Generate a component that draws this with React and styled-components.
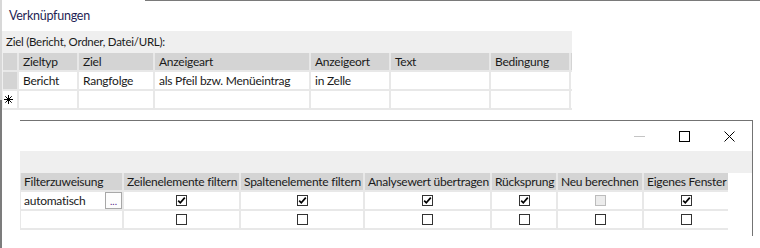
import styled, { createGlobalStyle } from 'styled-components'

const GlobalStyle = createGlobalStyle`
  html, body {
    margin: 0;
    padding: 0;
    background: #ffffff;
  }
  body {
    font-family: Lato, 'Noto Sans', Arial, sans-serif;
    font-size: 12px;
    letter-spacing: -0.25px;
    color: #1a1a1a;
  }
`

const Desktop = styled.div`
  position: relative;
  width: 760px;
  height: 248px;
  overflow: hidden;
  background: #ffffff;
`

const TopEdge = styled.div`
  position: absolute;
  top: 0;
  left: 145px;
  right: 0;
  height: 1px;
  background: #7a7a7a;
`

const BackWindow = styled.div`
  height: 248px;
  box-sizing: border-box;
  border-left: 2px solid;
  border-image: linear-gradient(to bottom, #d8d8d8 0 100px, #7c7c7c 100px) 1;
`

const Title = styled.div`
  height: 31px;
  padding-left: 7px;
  line-height: 32px;
  color: #1f1f55;
  font-size: 12.5px;
`

const Band = styled.div`
  width: 570px;
  background: #efefef;
  overflow: hidden;
  padding-left: ${(p) => p.$inset || 0}px;
  box-sizing: border-box;
`

const BandLabel = styled.div`
  height: 22px;
  line-height: 21px;
  padding-left: 3px;
  font-size: 11.5px;
  color: #1a1a1a;
`

const Grid = styled.div`
  display: grid;
  grid-template-columns: ${(p) => p.$cols};
  grid-auto-rows: 17px;
  gap: 2px;
  padding-bottom: 2px;
  background: #e8e8e8;
  width: max-content;
`

const Cell = styled.div`
  background: ${(p) => (p.$head ? '#d4d4d4' : '#ffffff')};
  line-height: 17px;
  padding-left: ${(p) => (p.$pad === undefined ? 4 : p.$pad)}px;
  white-space: nowrap;
  overflow: hidden;
  color: #1a1a1a;
  display: flex;
  align-items: center;
  justify-content: ${(p) => (p.$center ? 'center' : 'flex-start')};
  gap: 4px;
`

const Star = styled.svg`
  width: 9px;
  height: 9px;
  display: block;
  margin-left: -3px;
`

const FrontWindow = styled.div`
  position: absolute;
  left: 20px;
  top: 120px;
  width: 733px;
  height: 116px;
  box-sizing: border-box;
  border-top: 1px solid #737373;
  border-right: 1px solid #737373;
  background: #ffffff;
  display: flex;
  flex-direction: column;
`

const TitleBar = styled.div`
  height: 30px;
  display: flex;
  justify-content: flex-end;
  align-items: center;
  padding-right: 17px;
  gap: 34px;
`

const Control = styled.svg`
  width: 11px;
  height: 11px;
  display: block;
`

const FrontBand = styled.div`
  height: 22px;
  background: #efefef;
`

const FrontGrid = styled(Grid)`
  padding-left: 1px;
`

const CellText = styled.span`
  flex: 1;
`

const DotsButton = styled.div`
  width: 15px;
  height: 15px;
  border: 1px solid #a8a8a8;
  background: #fdfdfd;
  color: #5a2a8a;
  font-size: 10px;
  line-height: 17px;
  text-align: center;
  letter-spacing: 0;
  overflow: hidden;
`

const Box = styled.div`
  width: 11px;
  height: 11px;
  box-sizing: border-box;
  border: 1px solid ${(p) => (p.$disabled ? '#bcbcbc' : '#333333')};
  background: ${(p) => (p.$disabled ? '#ececec' : '#ffffff')};
  display: flex;
  align-items: center;
  justify-content: center;
`

const Check = ({ checked, disabled }) => (
  <Box $disabled={disabled}>
    {checked && (
      <svg width="9" height="9" viewBox="0 0 9 9">
        <path d="M1.2 4.6 L3.3 6.8 L7.8 1.6" fill="none" stroke="#000" strokeWidth="1.7" />
      </svg>
    )}
  </Box>
)

const backCols = '14px 58px 74px 154px 78px 98px 78px 1px'
const backHead = ['', 'Zieltyp', 'Ziel', 'Anzeigeart', 'Anzeigeort', 'Text', 'Bedingung', '']
const backRow = ['Bericht', 'Rangfolge', 'als Pfeil bzw. Menüeintrag', 'in Zelle', '', '', '']

const frontCols = '101px 115px 122px 125px 64px 84px 84px'
const frontHead = [
  'Filterzuweisung',
  'Zeilenelemente filtern',
  'Spaltenelemente filtern',
  'Analysewert übertragen',
  'Rücksprung',
  'Neu berechnen',
  'Eigenes Fenster',
]
const firstChecks = [
  { checked: true },
  { checked: true },
  { checked: true },
  { checked: true },
  { disabled: true },
  { checked: true },
]

const App = () => {
  return (
    <>
      <GlobalStyle />
      <Desktop>
        <TopEdge />
        <BackWindow>
          <Title>Verknüpfungen</Title>
          <Band $inset={1}>
            <BandLabel>Ziel (Bericht, Ordner, Datei/URL):</BandLabel>
            <Grid $cols={backCols}>
              {backHead.map((h, i) => (
                <Cell key={'h' + i} $head>
                  {h}
                </Cell>
              ))}
              <Cell $head />
              {backRow.map((v, i) => (
                <Cell key={'r' + i}>{v}</Cell>
              ))}
              <Cell>
                <Star viewBox="0 0 9 9">
                  <path
                    d="M4.5 0 V9 M0 4.5 H9 M1.3 1.3 L7.7 7.7 M7.7 1.3 L1.3 7.7"
                    stroke="#000"
                    strokeWidth="1"
                  />
                </Star>
              </Cell>
              {backRow.map((_, i) => (
                <Cell key={'n' + i} />
              ))}
            </Grid>
          </Band>
        </BackWindow>

        <FrontWindow>
          <TitleBar>
            <Control viewBox="0 0 11 11">
              <path d="M0 5.5 H11" stroke="#c4c4c4" strokeWidth="1" />
            </Control>
            <Control viewBox="0 0 11 11">
              <rect x="0.5" y="0.5" width="10" height="10" fill="none" stroke="#000" strokeWidth="1" />
            </Control>
            <Control viewBox="0 0 11 11">
              <path d="M0.5 0.5 L10.5 10.5 M10.5 0.5 L0.5 10.5" stroke="#000" strokeWidth="1" />
            </Control>
          </TitleBar>
          <FrontBand />
          <FrontGrid $cols={frontCols}>
            {frontHead.map((h) => (
              <Cell key={h} $head $pad={3}>
                {h}
              </Cell>
            ))}
            <Cell $pad={3}>
              <CellText>automatisch</CellText>
              <DotsButton>...</DotsButton>
            </Cell>
            {firstChecks.map((c, i) => (
              <Cell key={'c' + i} $center $pad={0}>
                <Check checked={c.checked} disabled={c.disabled} />
              </Cell>
            ))}
            <Cell />
            {firstChecks.map((_, i) => (
              <Cell key={'u' + i} $center $pad={0}>
                <Check />
              </Cell>
            ))}
          </FrontGrid>
        </FrontWindow>
      </Desktop>
    </>
  )
}

export default App
